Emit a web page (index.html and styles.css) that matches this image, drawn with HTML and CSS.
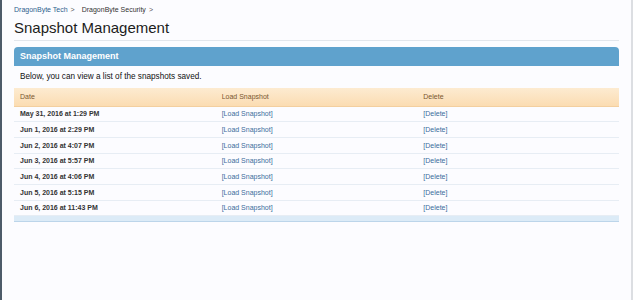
FILE: index.html
```html
<!DOCTYPE html>
<html>
	<head>
		<meta charset="utf-8">
		<title>Snapshot Management</title>
		<link rel="stylesheet" href="styles.css">
	</head>
	<body>
		<div id="page">
			<div class="crumbs">
				<a href="javascript:;">DragonByte Tech</a><span class="arr">&gt;</span>
				<span class="crumb-cur">DragonByte Security</span><span class="arr">&gt;</span>
			</div>
			<h1 class="title">Snapshot Management</h1>
			<div class="block">
				<h2 class="block-head">Snapshot Management</h2>
				<p class="block-desc">Below, you can view a list of the snapshots saved.</p>
				<table class="snaps">
					<thead>
						<tr><th>Date</th><th>Load Snapshot</th><th>Delete</th></tr>
					</thead>
					<tbody>
						<tr><td class="date">May 31, 2016 at 1:29 PM</td><td><a href="javascript:;">[Load Snapshot]</a></td><td><a href="javascript:;">[Delete]</a></td></tr>
						<tr><td class="date">Jun 1, 2016 at 2:29 PM</td><td><a href="javascript:;">[Load Snapshot]</a></td><td><a href="javascript:;">[Delete]</a></td></tr>
						<tr><td class="date">Jun 2, 2016 at 4:07 PM</td><td><a href="javascript:;">[Load Snapshot]</a></td><td><a href="javascript:;">[Delete]</a></td></tr>
						<tr><td class="date">Jun 3, 2016 at 5:57 PM</td><td><a href="javascript:;">[Load Snapshot]</a></td><td><a href="javascript:;">[Delete]</a></td></tr>
						<tr><td class="date">Jun 4, 2016 at 4:06 PM</td><td><a href="javascript:;">[Load Snapshot]</a></td><td><a href="javascript:;">[Delete]</a></td></tr>
						<tr><td class="date">Jun 5, 2016 at 5:15 PM</td><td><a href="javascript:;">[Load Snapshot]</a></td><td><a href="javascript:;">[Delete]</a></td></tr>
						<tr><td class="date">Jun 6, 2016 at 11:43 PM</td><td><a href="javascript:;">[Load Snapshot]</a></td><td><a href="javascript:;">[Delete]</a></td></tr>
					</tbody>
				</table>
				<div class="block-foot"></div>
			</div>
		</div>
	</body>
</html>
```

FILE: styles.css
```css
* { margin: 0; padding: 0; text-decoration: none; box-sizing: border-box;}
html, body { height: 100%;}
body { background: #fcfcff; font-family: "Liberation Sans", Arial, sans-serif; color: #222;}
#page { min-height: 100%; border-left: 2px solid #4d5b69; border-right: 2px solid #dcdee2; padding: 5px 12px 0 12px;}
a { color: #3b6c9c;}
.crumbs { font-size: 7px; line-height: 10px; color: #333; display: flex; align-items: center;}
.crumbs a { color: #2e5f8e;}
.crumbs .arr { margin: 0 7px 0 3px; color: #555;}
.title { font-size: 15px; font-weight: normal; line-height: 20px; margin-top: 3px; padding-bottom: 2px; border-bottom: 1px solid #e2e6ec; color: #1c1c1c;}
.block { margin-top: 6px;}
.block-head { background: #5fa2cd; color: #fff; font-size: 9px; font-weight: bold; line-height: 19px; height: 19px; padding-left: 6px; border-radius: 4px 4px 0 0;}
.block-desc { font-size: 8.2px; line-height: 22px; padding-left: 6px; color: #111;}
.snaps { width: 100%; border-collapse: collapse; table-layout: fixed;}
.snaps th { text-align: left; font-weight: normal; font-size: 7px; color: #7a5730; height: 18px; padding: 0 6px; background: linear-gradient(#fdebd1, #fbdcb2); border-bottom: 1px solid #f3cf9f;}
.snaps td { font-size: 7px; height: 15.7px; padding: 0 6px; border-bottom: 1px solid #e7edf4;}
.snaps td.date { color: #333; font-weight: bold;}
.block-foot { height: 6px; background: #dcebf7; border-bottom: 1px solid #bcd5ea;}
```
